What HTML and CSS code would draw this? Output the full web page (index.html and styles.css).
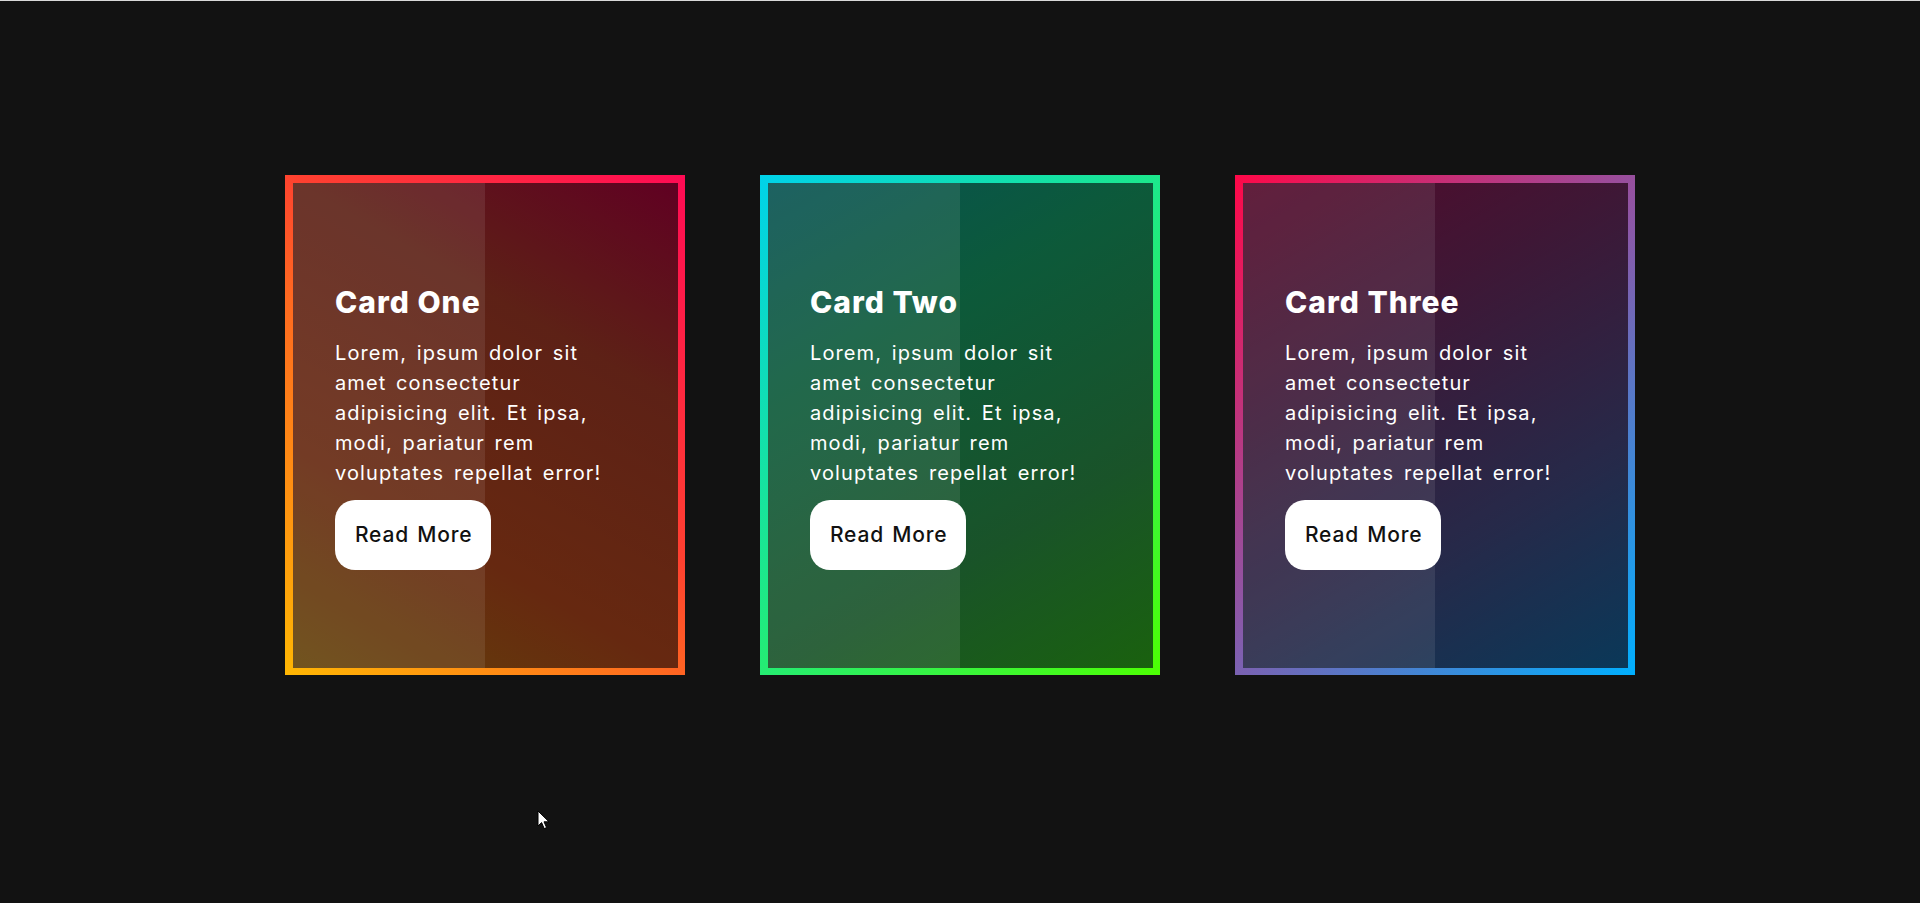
FILE: index.html
```html
<!DOCTYPE html>
<html lang="en">
<head>
<meta charset="utf-8">
<title>Cards</title>
<link rel="stylesheet" href="styles.css">
</head>
<body>
<main class="cards">
  <div class="card card-one">
    <div class="card-inner">
      <div class="card-content">
        <h2 class="card-title">Card One</h2>
        <p class="card-text">Lorem, ipsum dolor sit<br>amet consectetur<br>adipisicing elit. Et ipsa,<br>modi, pariatur rem<br>voluptates repellat error!</p>
        <a class="card-btn" href="#">Read More</a>
      </div>
    </div>
  </div>
  <div class="card card-two">
    <div class="card-inner">
      <div class="card-content">
        <h2 class="card-title">Card Two</h2>
        <p class="card-text">Lorem, ipsum dolor sit<br>amet consectetur<br>adipisicing elit. Et ipsa,<br>modi, pariatur rem<br>voluptates repellat error!</p>
        <a class="card-btn" href="#">Read More</a>
      </div>
    </div>
  </div>
  <div class="card card-three">
    <div class="card-inner">
      <div class="card-content">
        <h2 class="card-title">Card Three</h2>
        <p class="card-text">Lorem, ipsum dolor sit<br>amet consectetur<br>adipisicing elit. Et ipsa,<br>modi, pariatur rem<br>voluptates repellat error!</p>
        <a class="card-btn" href="#">Read More</a>
      </div>
    </div>
  </div>
</main>
<svg class="cursor" width="14" height="20" viewBox="0 0 14 20" aria-hidden="true">
  <path d="M1 1 L1 16 L4.6 12.6 L7.2 18.6 L9.6 17.6 L7 11.8 L12 11.8 Z" fill="#ffffff" stroke="#000000" stroke-width="1"/>
</svg>
</body>
</html>
```
FILE: styles.css
```css
* {
  box-sizing: border-box;
}

html, body {
  margin: 0;
  height: 100%;
}

body {
  background: #121212;
  border-top: 1px solid #d9d9d9;
  font-family: "Inter", "Open Sans", sans-serif;
  position: relative;
  overflow: hidden;
}

.cards {
  display: flex;
  justify-content: center;
  gap: 75px;
  padding-top: 174px;
}

.card {
  width: 400px;
  height: 500px;
  padding: 8px 7px 7px 8px;
}

.card-one {
  background: linear-gradient(45deg, #ffb703 0%, #ff6a20 42%, #ff4030 57%, #ff0a54 100%);
}
.card-two {
  background: linear-gradient(135deg, #00d2ea, #20ea80 50%, #4dff03);
}
.card-three {
  background: linear-gradient(135deg, #ff0848, #8a58a8 50%, #00b0ff);
}

.card-inner {
  position: relative;
  height: 100%;
  display: flex;
  align-items: flex-start;
  padding: 99px 0 0 42px;
}
.card-one .card-inner {
  background: linear-gradient(rgba(0,0,0,.6), rgba(0,0,0,.6)),
              linear-gradient(30deg, #f8a816 0%, #ff6428 31%, #e85237 69%, #f00055 100%);
}
.card-two .card-inner {
  background: linear-gradient(rgba(0,0,0,.62), rgba(0,0,0,.62)),
              linear-gradient(150deg, #12d8d8 0%, #20eb99 31%, #42da6c 69%, #44ff25 100%);
}
.card-three .card-inner {
  background: linear-gradient(rgba(0,0,0,.62), rgba(0,0,0,.62)),
              linear-gradient(150deg, #da186c 0%, #a43c8c 31%, #646cc0 69%, #1a93e8 100%);
}

.card-inner::before {
  content: "";
  position: absolute;
  left: 0;
  top: 0;
  bottom: 0;
  width: 192px;
  background: rgba(255, 255, 255, 0.09);
}

.card-content {
  position: relative;
  color: #ffffff;
}

.card-title {
  margin: 0 0 16px;
  font-size: 30px;
  font-weight: 800;
  line-height: 40px;
  letter-spacing: 1px;
}

.card-text {
  margin: 0 0 12px;
  font-size: 20px;
  line-height: 30px;
  font-weight: 400;
  letter-spacing: 1.1px;
  word-spacing: 3px;
  white-space: nowrap;
}

.card-btn {
  display: inline-block;
  background: #ffffff;
  color: #111111;
  text-decoration: none;
  font-size: 21px;
  font-weight: 500;
  line-height: 30px;
  letter-spacing: 0.8px;
  word-spacing: 2px;
  padding: 20px 19px 20px 20px;
  border-radius: 20px;
}

.cursor {
  position: absolute;
  left: 537px;
  top: 809px;
}
```
